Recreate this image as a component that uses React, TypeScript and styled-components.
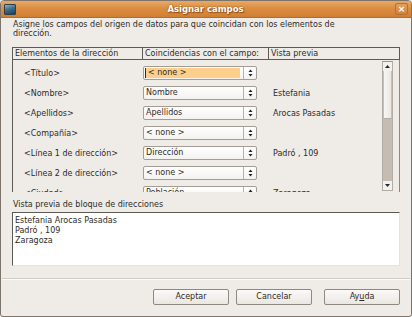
import React from "react";
import styled, { createGlobalStyle } from "styled-components";

const Global = createGlobalStyle`
  html, body { margin: 0; padding: 0; background: #efebe7; }
  body { font-family: "DejaVu Sans", "Liberation Sans", sans-serif; font-size: 8px; color: #2e2b28; }
  * { box-sizing: border-box; }
`;

const Window = styled.div`
  width: 412px;
  height: 317px;
  display: flex;
  flex-direction: column;
  background: #efebe7;
  border: 1px solid #7d756c;
  border-radius: 4px 4px 3px 3px;
  overflow: hidden;
`;

const TitleBar = styled.div`
  height: 17px;
  flex: none;
  display: flex;
  align-items: center;
  justify-content: space-between;
  padding: 0 3px 0 3px;
  background: linear-gradient(#e9a964, #db8e42 45%, #cf7f33);
  border-bottom: 1px solid #b56c28;
`;

const Title = styled.div`
  flex: 1;
  text-align: center;
  color: #fff;
  font-weight: bold;
  font-size: 8.5px;
  text-shadow: 0 0 2px #8a4a12, 1px 1px 1px #9a5218;
`;

const AppIcon = styled.div`
  width: 12px;
  height: 11px;
  border-radius: 1px;
  background: linear-gradient(160deg, #8fb3c9 0%, #3f6f8c 45%, #1f3a4d 100%);
  border: 1px solid #2a3e4c;
`;

const CloseBtn = styled.div`
  width: 13px;
  height: 12px;
  border: 1px solid #b8702e;
  border-radius: 2px;
  background: linear-gradient(#e3a260, #cf8239);
  color: #fff;
  font-size: 9px;
  font-weight: bold;
  line-height: 10px;
  text-align: center;
`;

const Body = styled.div`
  flex: 1;
  display: flex;
  flex-direction: column;
  padding: 2px 11px 0 11px;
`;

const Description = styled.div`
  line-height: 9px;
  padding-left: 1px;
  height: 18px;
`;

const Header = styled.div`
  display: grid;
  grid-template-columns: 130px 126px 1fr;
  height: 13px;
  border: 1px solid #5e5953;
  margin-top: 9px;
  background: #efebe7;
`;

const HeaderCell = styled.div<{ $last?: boolean }>`
  padding-left: 2px;
  line-height: 11px;
  border-right: ${(p) => (p.$last ? "none" : "1px solid #5e5953")};
  white-space: nowrap;
  overflow: hidden;
`;

const ListBox = styled.div`
  height: 132px;
  display: flex;
  border-left: 1px solid #5e5953;
  border-right: 1px solid #8e877f;
  overflow: hidden;
`;

const Rows = styled.div`
  flex: 1;
  padding-top: 3px;
  overflow: hidden;
`;

const Row = styled.div`
  display: grid;
  grid-template-columns: 130px 127px 1fr;
  height: 20px;
  align-items: center;
`;

const FieldLabel = styled.div`
  padding-left: 11px;
  white-space: nowrap;
`;

const Combo = styled.div`
  width: 114px;
  height: 14px;
  display: flex;
  border: 1px solid #a39d96;
  border-radius: 2px;
  background: linear-gradient(#ffffff, #f4f2ef);
  overflow: hidden;
`;

const ComboText = styled.div<{ $active?: boolean }>`
  flex: 1;
  padding-left: 2px;
  margin: ${(p) => (p.$active ? "1px 3px 1px 1px" : "0")};
  background: ${(p) => (p.$active ? "#fcd08c" : "transparent")};
  border-left: ${(p) => (p.$active ? "1px solid #2e2b28" : "none")};
  line-height: ${(p) => (p.$active ? "10px" : "12px")};
  white-space: nowrap;
`;

const ComboButton = styled.div`
  width: 13px;
  border-left: 1px solid #b7b1aa;
  display: flex;
  align-items: center;
  justify-content: center;
`;

const Preview = styled.div`
  padding-left: 3px;
  white-space: nowrap;
`;

const ScrollBar = styled.div`
  width: 11px;
  margin-right: 6px;
  display: flex;
  flex-direction: column;
  border: 1px solid #b3aca4;
  border-top: 1px solid #9c958d;
  margin-top: 1px;
  margin-bottom: 1px;
  background: #c8c0b7;
`;

const ScrollArrow = styled.div`
  height: 9px;
  flex: none;
  display: flex;
  align-items: center;
  justify-content: center;
  background: #f3f1ee;
`;

const Thumb = styled.div`
  height: 48px;
  flex: none;
  background: linear-gradient(90deg, #f8f7f5, #ebe7e3);
  border-left: 1px solid #c4beb7;
  border-right: 1px solid #c4beb7;
  border-bottom: 1px solid #b3aca4;
`;

const Trough = styled.div`
  flex: 1;
  background: #c5bdb4;
`;

const SectionLabel = styled.div`
  margin-top: 8px;
  padding-left: 1px;
  line-height: 10px;
  height: 12px;
`;

const TextArea = styled.div`
  height: 54px;
  background: #fff;
  border-top: 1px solid #5e5953;
  border-left: 1px solid #5e5953;
  border-right: 1px solid #e6e2de;
  border-bottom: 1px solid #e6e2de;
  padding: 3px 2px;
  line-height: 10px;
`;

const Separator = styled.div`
  margin: 12px -10px 0 -10px;
  border-top: 1px solid #d2ccc5;
  border-bottom: 1px solid #fbfaf9;
`;

const ButtonRow = styled.div`
  display: flex;
  justify-content: flex-end;
  padding-top: 9px;
`;

const Button = styled.div<{ $gap?: number }>`
  width: 76px;
  height: 16px;
  margin-left: ${(p) => p.$gap ?? 0}px;
  border: 1px solid #8f8880;
  border-radius: 2px;
  background: linear-gradient(#fbfaf9, #eae6e2);
  text-align: center;
  line-height: 14px;
`;

const Mnemonic = styled.span`
  text-decoration: underline;
`;

const Arrows = () => (
  <svg width="5" height="8" viewBox="0 0 5 8">
    <path d="M2.5 0.5 L4.5 3 L0.5 3 Z" fill="#222" />
    <path d="M0.5 5 L4.5 5 L2.5 7.5 Z" fill="#222" />
  </svg>
);

const Tri = ({ up }: { up?: boolean }) => (
  <svg width="5" height="3" viewBox="0 0 5 3">
    <path d={up ? "M2.5 0 L5 3 L0 3 Z" : "M0 0 L5 0 L2.5 3 Z"} fill="#2a2826" />
  </svg>
);

const rows = [
  { label: "<Título>", value: "< none >", preview: "", active: true },
  { label: "<Nombre>", value: "Nombre", preview: "Estefania" },
  { label: "<Apellidos>", value: "Apellidos", preview: "Arocas Pasadas" },
  { label: "<Compañía>", value: "< none >", preview: "" },
  { label: "<Línea 1 de dirección>", value: "Dirección", preview: "Padró , 109" },
  { label: "<Línea 2 de dirección>", value: "< none >", preview: "" },
  { label: "<Ciudad>", value: "Población", preview: "Zaragoza" },
];

export default function App() {
  return (
    <>
      <Global />
      <Window>
        <TitleBar>
          <AppIcon />
          <Title>Asignar campos</Title>
          <CloseBtn>×</CloseBtn>
        </TitleBar>
        <Body>
          <Description>
            Asigne los campos del origen de datos para que coincidan con los elementos de
            <br />
            dirección.
          </Description>
          <Header>
            <HeaderCell>Elementos de la dirección</HeaderCell>
            <HeaderCell>Coincidencias con el campo:</HeaderCell>
            <HeaderCell $last>Vista previa</HeaderCell>
          </Header>
          <ListBox>
            <Rows>
              {rows.map((r) => (
                <Row key={r.label}>
                  <FieldLabel>{r.label}</FieldLabel>
                  <Combo>
                    <ComboText $active={r.active}>{r.value}</ComboText>
                    <ComboButton>
                      <Arrows />
                    </ComboButton>
                  </Combo>
                  <Preview>{r.preview}</Preview>
                </Row>
              ))}
            </Rows>
            <ScrollBar>
              <ScrollArrow>
                <Tri up />
              </ScrollArrow>
              <Thumb />
              <Trough />
              <ScrollArrow>
                <Tri />
              </ScrollArrow>
            </ScrollBar>
          </ListBox>
          <SectionLabel>Vista previa de bloque de direcciones</SectionLabel>
          <TextArea>
            Estefania Arocas Pasadas
            <br />
            Padró , 109
            <br />
            Zaragoza
          </TextArea>
          <Separator />
          <ButtonRow>
            <Button>Aceptar</Button>
            <Button $gap={7}>Cancelar</Button>
            <Button $gap={12}>
              Ay<Mnemonic>u</Mnemonic>da
            </Button>
          </ButtonRow>
        </Body>
      </Window>
    </>
  );
}
